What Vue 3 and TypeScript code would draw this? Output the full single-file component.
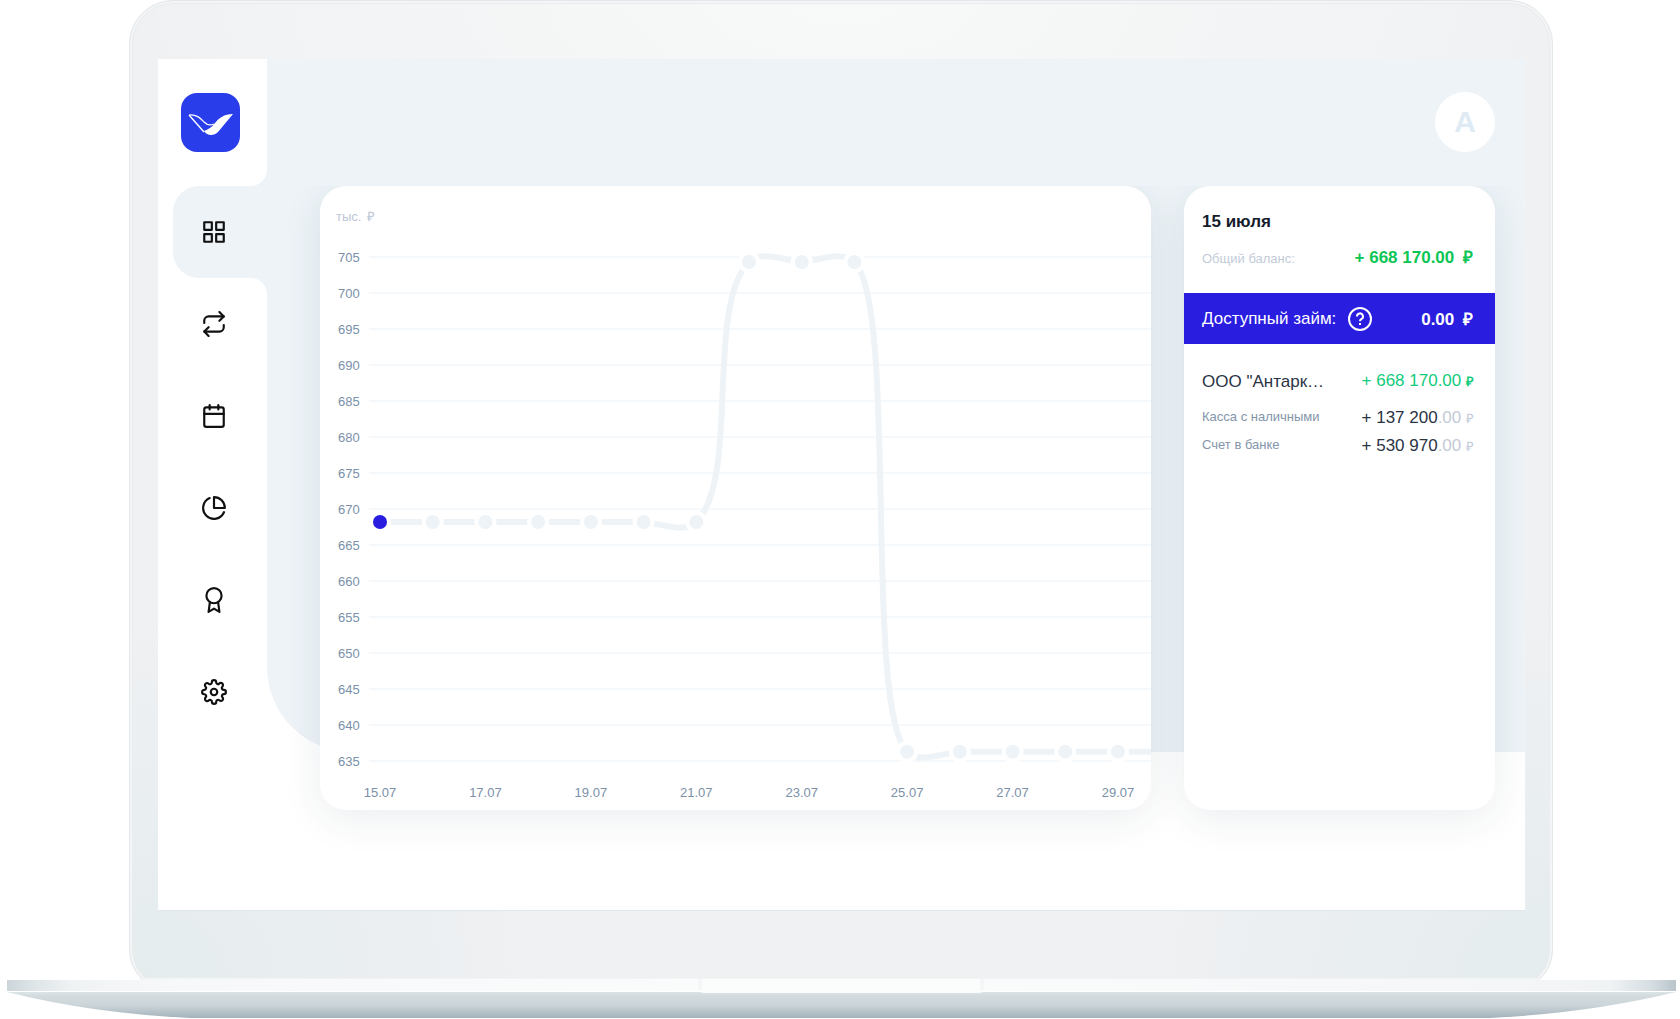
<script setup lang="ts">
import { ref } from 'vue'

interface NavItem {
  label: string
  paths: string[]
}

interface Point {
  x: number
  y: number
}

const navItems: NavItem[] = [
  { label: 'Обзор', paths: ['M3 3h7v7H3z', 'M14 3h7v7h-7z', 'M14 14h7v7h-7z', 'M3 14h7v7H3z'] },
  { label: 'Операции', paths: ['M17 1l4 4-4 4', 'M3 11V9a4 4 0 0 1 4-4h14', 'M7 23l-4-4 4-4', 'M21 13v2a4 4 0 0 1-4 4H3'] },
  { label: 'Календарь', paths: ['M5 4h14a2 2 0 0 1 2 2v14a2 2 0 0 1-2 2H5a2 2 0 0 1-2-2V6a2 2 0 0 1 2-2z', 'M16 2v4', 'M8 2v4', 'M3 10h18'] },
  { label: 'Отчёты', paths: ['M21.21 15.89A10 10 0 1 1 8 2.83', 'M22 12A10 10 0 0 0 12 2v10z'] },
  { label: 'Достижения', paths: ['M12 1a7 7 0 1 0 0 14a7 7 0 1 0 0-14z', 'M8.21 13.89L7 23l5-3 5 3-1.21-9.12'] },
  {
    label: 'Настройки',
    paths: [
      'M12 9a3 3 0 1 0 0 6a3 3 0 1 0 0-6z',
      'M19.4 15a1.65 1.65 0 0 0 .33 1.82l.06.06a2 2 0 0 1 0 2.83 2 2 0 0 1-2.83 0l-.06-.06a1.65 1.65 0 0 0-1.82-.33 1.65 1.65 0 0 0-1 1.51V21a2 2 0 0 1-2 2 2 2 0 0 1-2-2v-.09A1.65 1.65 0 0 0 9 19.4a1.65 1.65 0 0 0-1.82.33l-.06.06a2 2 0 0 1-2.83 0 2 2 0 0 1 0-2.83l.06-.06a1.65 1.65 0 0 0 .33-1.82 1.65 1.65 0 0 0-1.51-1H3a2 2 0 0 1-2-2 2 2 0 0 1 2-2h.09A1.65 1.65 0 0 0 4.6 9a1.65 1.65 0 0 0-.33-1.82l-.06-.06a2 2 0 0 1 0-2.83 2 2 0 0 1 2.83 0l.06.06a1.65 1.65 0 0 0 1.82.33H9a1.65 1.65 0 0 0 1-1.51V3a2 2 0 0 1 2-2 2 2 0 0 1 2 2v.09a1.65 1.65 0 0 0 1 1.51 1.65 1.65 0 0 0 1.82-.33l.06-.06a2 2 0 0 1 2.83 0 2 2 0 0 1 0 2.83l-.06.06a1.65 1.65 0 0 0-.33 1.82V9a1.65 1.65 0 0 0 1.51 1H21a2 2 0 0 1 2 2 2 2 0 0 1-2 2h-.09a1.65 1.65 0 0 0-1.51 1z',
    ],
  },
]
const activeNav = ref(0)

// Balance per day in thousands of roubles, starting on 15 July
const firstDay = 15
const balances = [668.2, 668.2, 668.2, 668.2, 668.2, 668.2, 668.2, 704.3, 704.3, 704.3, 636.3, 636.3, 636.3, 636.3, 636.3, 636.3]
const selected = ref(0)

const ticks = Array.from({ length: 15 }, (_, i) => 705 - i * 5)
const yOf = (value: number): number => 71 + (705 - value) * 7.2
const xOf = (day: number): number => 60 + (day * 738) / 14

const points: Point[] = balances.map((value, i) => ({ x: xOf(i), y: yOf(value) }))
const dayLabels = balances
  .map((_, i) => ({ x: xOf(i), text: `${firstDay + i}.07` }))
  .filter((_, i) => i % 2 === 0 && i < 15)

// Where the balance starts or stops changing the curve passes the point at 45°:
// a long handle on the steep side, a short one on the flat side
const LONG = 44
const SHORT = 13

function smoothPath(list: Point[]): string {
  const handles = list.map((p, i) => {
    const a = list[Math.max(i - 1, 0)]
    const b = list[Math.min(i + 1, list.length - 1)]
    const slope = Math.sign(b.y - a.y)
    const before = a.y === p.y ? SHORT : LONG
    const after = b.y === p.y ? SHORT : LONG
    return {
      inX: p.x - before,
      inY: p.y - before * slope,
      outX: p.x + after,
      outY: p.y + after * slope,
    }
  })
  let d = `M${list[0].x} ${list[0].y}`
  for (let i = 1; i < list.length; i++) {
    const from = handles[i - 1]
    const to = handles[i]
    d += `C${from.outX} ${from.outY} ${to.inX} ${to.inY} ${list[i].x} ${list[i].y}`
  }
  return d
}
const linePath = smoothPath(points)

const accounts = [
  { name: 'Касса с наличными', whole: '137 200', cents: '.00' },
  { name: 'Счет в банке', whole: '530 970', cents: '.00' },
]
</script>

<template>
  <div class="laptop">
    <div class="lid">
      <div class="screen">
        <aside class="sidebar">
          <div class="brand">
            <a href="#" class="logo" aria-label="На главную">
              <svg viewBox="0 0 59 59" width="59" height="59" aria-hidden="true">
                <path d="M8 22C16 21 20 26 23 29C26 32 29 33 33 31" fill="none" stroke="#fff" stroke-width="1.200" />
                <path d="M8 22L23 39" fill="none" stroke="#fff" stroke-width="1.400" />
                <path d="M52 21C43 21 38 25 34 30C31 34 28 36 23 38C26 43 33 43 37 39Z" fill="#fff" />
              </svg>
            </a>
          </div>
          <nav>
            <ul class="menu">
              <li v-for="(item, i) in navItems" :key="item.label" :class="{ active: i === activeNav }">
                <a href="#" :aria-label="item.label" @click.prevent="activeNav = i">
                  <svg class="icon" viewBox="0 0 24 24" aria-hidden="true">
                    <path v-for="d in item.paths" :key="d" :d="d" />
                  </svg>
                </a>
              </li>
            </ul>
          </nav>
        </aside>

        <main class="content">
          <header class="topbar">
            <button class="avatar" type="button">A</button>
          </header>

          <div class="cards">
            <section class="card chart">
              <svg class="plot" role="img" aria-label="График баланса">
                <text class="unit" x="16" y="35">тыс.</text>
                <text class="unit" x="47" y="35">₽</text>
                <g v-for="tick in ticks" :key="tick">
                  <line class="grid" x1="49" x2="100%" :y1="yOf(tick)" :y2="yOf(tick)" />
                  <text class="label" x="18" :y="yOf(tick) + 5">{{ tick }}</text>
                </g>
                <path class="line" :d="linePath" />
                <circle
                  v-for="(p, i) in points"
                  :key="p.x"
                  class="dot"
                  :class="{ chosen: i === selected }"
                  :cx="p.x"
                  :cy="p.y"
                  r="9"
                  @click="selected = i"
                />
                <text v-for="day in dayLabels" :key="day.text" class="label day" :x="day.x" y="611">{{ day.text }}</text>
              </svg>
            </section>

            <section class="card balance">
              <div class="summary">
                <h2>15 июля</h2>
                <div class="row">
                  <span class="muted">Общий баланс:</span>
                  <strong class="total">+ 668 170.00 <span class="rouble">₽</span></strong>
                </div>
              </div>
              <div class="loan">
                <span>Доступный займ:</span>
                <button class="help" type="button" aria-label="Подробнее о займе">
                  <svg viewBox="0 0 24 24" width="24" height="24" aria-hidden="true">
                    <circle cx="12" cy="12" r="11" />
                    <path d="M9 9.500a3 3 0 1 1 4.500 2.500q-1.500 .8-1.500 2.200M12 16v2" />
                  </svg>
                </button>
                <strong>0.00 <span class="rouble">₽</span></strong>
              </div>
              <div class="details">
                <div class="row company">
                  <span>ООО "Антарк…</span>
                  <span class="amount income">+ 668 170.00 <small>₽</small></span>
                </div>
                <div v-for="account in accounts" :key="account.name" class="row account">
                  <span class="name">{{ account.name }}</span>
                  <span class="amount">+ {{ account.whole }}<span class="faint">{{ account.cents }} <small>₽</small></span></span>
                </div>
              </div>
            </section>
          </div>
        </main>
      </div>
    </div>

    <svg class="base" viewBox="0 0 1680 42" preserveAspectRatio="none" aria-hidden="true">
      <defs>
        <linearGradient id="deck" x1="0" x2="1" y1="0" y2="0">
          <stop offset="0" stop-color="#ccd5da" />
          <stop offset="0.015" stop-color="#dde4e7" />
          <stop offset="0.040" stop-color="#f0f3f4" />
          <stop offset="0.100" stop-color="#f7f8f9" />
          <stop offset="0.500" stop-color="#fbfcfc" />
          <stop offset="0.900" stop-color="#f5f6f7" />
          <stop offset="0.960" stop-color="#f0f3f4" />
          <stop offset="0.985" stop-color="#d6dee2" />
          <stop offset="1" stop-color="#b9c5cb" />
        </linearGradient>
        <linearGradient id="belly" x1="0" x2="0" y1="0" y2="1">
          <stop offset="0" stop-color="#dbe4e7" />
          <stop offset="0.150" stop-color="#d3dbde" />
          <stop offset="0.500" stop-color="#ccd5d9" />
          <stop offset="1" stop-color="#a3b2bb" />
        </linearGradient>
      </defs>
      <path d="M7 15Q90 36 190 41H1490Q1590 36 1676 15Z" fill="url(#belly)" />
      <path d="M7 3H140V1H1540V3H1676V14H7Z" fill="url(#deck)" />
      <path d="M140 1H1540" stroke="#eceef0" />
      <path d="M698 2H984V13Q984 16 978 16H706Q698 16 698 11Z" fill="#fbfcfc" />
      <path d="M700 2V13M982 2V13" stroke="#f4f6f8" stroke-width="4" />
    </svg>
  </div>
</template>

<style>
body {
  margin: 0;
  background: #fff;
}
</style>

<style scoped>
.laptop {
  font-family: 'Liberation Sans', Arial, sans-serif;
  color: #2b3445;
  overflow: hidden;
}

.lid {
  box-sizing: border-box;
  margin: 0 127px 0 129px;
  padding: 58px 27px 79px 28px;
  border: 1px solid #e2e7ea;
  border-radius: 44px 44px 40px 40px;
  background:
    radial-gradient(ellipse 50% 30% at 50% 0, #f8faf9, rgba(248, 250, 249, 0)),
    radial-gradient(ellipse 30% 40% at 0 100%, #e4ecee, rgba(228, 236, 238, 0)),
    radial-gradient(ellipse 30% 40% at 100% 100%, #e4ecee, rgba(228, 236, 238, 0)),
    #f0f1f3;
  box-shadow: inset 0 0 0 2px #f4f5f6, inset 0 0 0 3px #e9ecee;
}

.screen {
  display: flex;
  overflow: hidden;
  background: #fff;
  box-shadow: 0 1px 0 #dde8eb;
}

.sidebar {
  flex: none;
  width: 109px;
  background: linear-gradient(#edf3f7 300px, #fff 300px);
}

.brand {
  box-sizing: border-box;
  height: 127px;
  padding: 34px 0 0 23px;
  border-bottom-right-radius: 16px;
  background: #fff;
}

.logo {
  display: block;
  width: 59px;
  height: 59px;
  border-radius: 16px;
  background: #293eea;
}

.menu {
  margin: 0;
  padding: 0;
  list-style: none;
}

.menu li {
  height: 92px;
  background: #fff;
}

.menu li.active {
  padding-left: 15px;
}

.menu li.active + li {
  border-top-right-radius: 16px;
}

.menu a {
  display: flex;
  align-items: center;
  height: 100%;
  padding-left: 43px;
}

.menu .active a {
  padding-left: 28px;
  border-radius: 26px 0 0 26px;
  background: #edf3f7;
}

.icon {
  width: 26px;
  height: 26px;
  fill: none;
  stroke: #111;
  stroke-width: 2;
  stroke-linecap: round;
  stroke-linejoin: round;
}

.content {
  position: relative;
  z-index: 0;
  flex: 1;
  min-width: 0;
  padding: 33px 30px 100px 53px;
}

/* Tinted backdrop behind the header and the upper part of the cards */
.content::before {
  content: '';
  position: absolute;
  z-index: -1;
  inset: 0 0 158px;
  border-bottom-left-radius: 85px;
  background: #edf3f7;
}

.topbar {
  display: flex;
  justify-content: flex-end;
  margin-bottom: 34px;
}

.avatar {
  width: 60px;
  height: 60px;
  padding: 0;
  border: 0;
  border-radius: 50%;
  background: #fff;
  color: #deebf4;
  font: bold 30px 'Liberation Sans', Arial, sans-serif;
}

.cards {
  display: flex;
  gap: 33px;
  clip-path: inset(0 -60px -80px -60px);
}

.card {
  overflow: hidden;
  min-height: 624px;
  border-radius: 26px;
  background: #fff;
  box-shadow: 0 8px 40px rgba(30, 50, 80, 0.09);
}

.chart {
  flex: 1;
  min-width: 0;
}

.plot {
  display: block;
  width: 100%;
  height: 624px;
}

.unit {
  fill: #bcc6d6;
  font-size: 13px;
}

.label {
  fill: #7b90a9;
  font-size: 13px;
}

.day {
  text-anchor: middle;
}

.grid {
  stroke: #f6f9fb;
  stroke-width: 2;
}

.line {
  fill: none;
  stroke: #edf3f7;
  stroke-width: 6;
}

.dot {
  fill: #edf3f7;
  stroke: #fff;
  stroke-width: 4;
  cursor: pointer;
}

.dot.chosen {
  fill: #291de0;
}

.balance {
  flex: none;
  width: 311px;
}

.row {
  display: flex;
  align-items: center;
  justify-content: space-between;
}

.summary {
  box-sizing: border-box;
  height: 107px;
  padding: 26px 22px 0 18px;
}

h2 {
  margin: 0 0 16px;
  color: #141c2b;
  font-size: 17px;
  line-height: 20px;
}

.muted {
  color: #c3cbd8;
  font-size: 13px;
}

.total {
  color: #0bc655;
  font-size: 17px;
  line-height: 20px;
}

.rouble {
  margin-left: 4px;
}

.loan {
  display: flex;
  align-items: center;
  height: 51px;
  padding: 0 22px 0 18px;
  background: #291de0;
  color: #fff;
  font-size: 17px;
}

.loan strong {
  margin-left: auto;
}

.help {
  width: 24px;
  height: 24px;
  margin-left: 12px;
  padding: 0;
  border: 0;
  background: none;
}

.help svg {
  display: block;
  fill: none;
  stroke: #fff;
  stroke-width: 2;
}

.details {
  padding: 27px 21px 0 18px;
}

.company {
  margin-bottom: 12px;
  font-size: 17px;
  line-height: 20px;
}

.account {
  height: 28px;
}

.name {
  padding-bottom: 4px;
  color: #8494aa;
  font-size: 13px;
}

.amount {
  font-size: 17px;
}

.amount small {
  font-size: 13px;
}

.income {
  color: #12cb7c;
}

.income small {
  font-weight: bold;
}

.faint {
  color: #c3cbd8;
}

.base {
  position: relative;
  display: block;
  width: 100%;
  height: 42px;
  margin-top: -13px;
}
</style>
